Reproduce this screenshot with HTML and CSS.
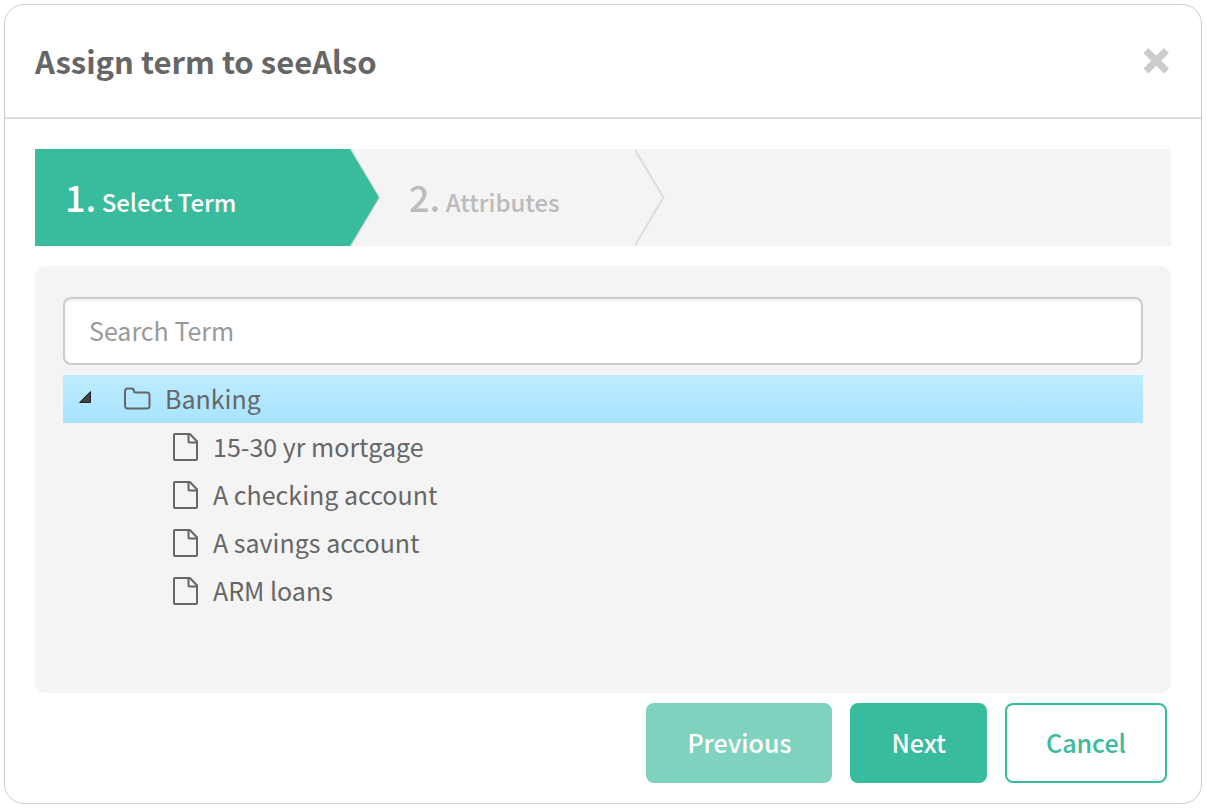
FILE: index.html
```html
<!DOCTYPE html>
<html lang="en">
<head>
<meta charset="utf-8">
<title>Assign term to seeAlso</title>
<link rel="stylesheet" href="styles.css">
</head>
<body>
<svg class="symbols" aria-hidden="true">
  <symbol id="file" viewBox="0 0 26 28">
    <path d="M3 1H18L25 8.500V26a1 1 0 0 1-1 1H3a1 1 0 0 1-1-1V2a1 1 0 0 1 1-1z"/>
    <path d="M16.500 1V8.500a1 1 0 0 0 1 1H25"/>
  </symbol>
</svg>
<div class="modal" role="dialog" aria-labelledby="title">
  <header class="modal-header">
    <h1 class="modal-title" id="title">Assign term to seeAlso</h1>
    <button class="close" type="button" aria-label="Close">
      <svg width="26" height="26" viewBox="0 0 26 26"><path d="M3 2.500L23.500 23M23.500 2.500L3 23"/></svg>
    </button>
  </header>
  <main class="modal-body">
    <ol class="steps">
      <li class="step step-active">
        <span class="step-label"><span class="step-number">1.</span> Select Term</span>
        <svg class="arrow" viewBox="0 0 30 97" preserveAspectRatio="none"><path class="arrow-line" d="M0 -1L29 48.500L0 98"/><path class="arrow-fill" d="M0 0L29 48.500L0 97z"/></svg>
      </li>
      <li class="step">
        <span class="step-label"><span class="step-number">2.</span> Attributes</span>
        <svg class="arrow" viewBox="0 0 30 97" preserveAspectRatio="none"><path class="arrow-line" d="M-1 -1L28.500 48.500L-1 98"/></svg>
      </li>
    </ol>
    <section class="panel">
      <input class="search" type="text" placeholder="Search Term" aria-label="Search Term">
      <ul class="tree" role="tree">
        <li role="treeitem" aria-expanded="true">
          <div class="row row-selected">
            <svg class="toggle" width="14" height="18" viewBox="0 0 14 18"><path d="M1.500 12.500L12.500 1.500V12.500z"/></svg>
            <svg class="icon folder" width="28" height="24" viewBox="0 0 28 24"><path d="M2 4a2.500 2.500 0 0 1 2.500-2.500H8.500a2.500 2.500 0 0 1 2.500 2.500A1.500 1.500 0 0 0 12.500 5.500H24a2.500 2.500 0 0 1 2.500 2.500V19a2.500 2.500 0 0 1-2.500 2.500H4.500a2.500 2.500 0 0 1-2.500-2.500z"/></svg>
            <span class="row-label">Banking</span>
          </div>
          <ul class="tree" role="group">
            <li class="row row-child" role="treeitem"><svg class="icon" width="26" height="28"><use href="#file"/></svg><span class="row-label">15-30 yr mortgage</span></li>
            <li class="row row-child" role="treeitem"><svg class="icon" width="26" height="28"><use href="#file"/></svg><span class="row-label">A checking account</span></li>
            <li class="row row-child" role="treeitem"><svg class="icon" width="26" height="28"><use href="#file"/></svg><span class="row-label">A savings account</span></li>
            <li class="row row-child" role="treeitem"><svg class="icon" width="26" height="28"><use href="#file"/></svg><span class="row-label">ARM loans</span></li>
          </ul>
        </li>
      </ul>
    </section>
  </main>
  <footer class="modal-footer">
    <button class="button" type="button" disabled>Previous</button>
    <button class="button" type="button">Next</button>
    <button class="button button-outline" type="button">Cancel</button>
  </footer>
</div>
</body>
</html>
```

FILE: styles.css
```css
* {
  box-sizing: border-box;
}

body {
  margin: 0;
  padding: 4px;
  min-height: 100vh;
  display: flex;
  background: #fff;
  color: #666;
  font-family: "Noto Sans CJK SC", "Noto Sans", sans-serif;
  font-size: 25px;
  line-height: 48px;
}

button,
input {
  font: inherit;
}

.symbols {
  position: absolute;
  width: 0;
  height: 0;
}

.modal {
  flex: 1;
  display: flex;
  flex-direction: column;
  border: 1px solid #ccc;
  border-radius: 20px;
  background: #fff;
}

.modal-header {
  display: flex;
  align-items: center;
  justify-content: space-between;
  padding: 32px 32px 32px 30px;
  border-bottom: 2px solid #ddd;
}

.modal-title {
  margin: 0;
  font-size: 31px;
  font-weight: 700;
  line-height: 48px;
}

.close {
  display: flex;
  padding: 0;
  border: 0;
  background: none;
}

.close path {
  stroke: #ccc;
  stroke-width: 7;
}

.modal-body {
  flex: 1;
  display: flex;
  flex-direction: column;
  gap: 20px;
  padding: 30px 30px 0;
}

.steps {
  display: flex;
  margin: 0;
  padding: 0;
  list-style: none;
  background: #f4f4f4;
  color: #bbb;
}

.step {
  display: flex;
  justify-content: space-between;
  width: 285px;
  height: 97px;
  padding-left: 29px;
  font-size: 24px;
  font-weight: 500;
}

.step-active {
  width: 345px;
  padding-left: 0;
  color: #fff;
}

.step-label {
  flex: 1;
  padding-top: 23px;
}

.step-active .step-label {
  padding-left: 30px;
  background: #39bb9d;
}

.step-number {
  font-size: 36px;
}

.arrow {
  width: 30px;
  height: 97px;
}

.arrow-fill {
  fill: #39bb9d;
}

.arrow-line {
  fill: none;
  stroke: #ddd;
  stroke-width: 2;
}

.panel {
  flex: 1;
  padding: 31px 28px 30px;
  border-radius: 10px;
  background: #f4f4f4;
}

.search {
  display: block;
  width: 100%;
  height: 68px;
  margin-bottom: 10px;
  padding: 0 24px 2px;
  border: 2px solid #ccc;
  border-radius: 8px;
  background: #fff;
  box-shadow: inset 0 2px 3px #0001;
  color: #666;
}

.search::placeholder {
  color: #999;
  opacity: 1;
}

.tree {
  margin: 0;
  padding: 0;
  list-style: none;
}

.row {
  display: flex;
  align-items: center;
  height: 48px;
}

.row-label {
  padding-bottom: 2px;
}

.row-selected {
  padding-left: 15px;
  background: linear-gradient(#beebff, #a8e4ff);
}

.row-child {
  gap: 15px;
  padding-left: 109px;
}

.toggle {
  margin-right: 31px;
  fill: #444;
  stroke: #222;
}

.icon {
  fill: none;
  stroke: #666;
  stroke-width: 2;
}

.folder {
  margin-right: 14px;
}

.modal-footer {
  display: flex;
  justify-content: flex-end;
  gap: 18px;
  padding: 10px 34px 20px;
}

.button {
  height: 80px;
  padding: 0 39px 2px;
  border: 2px solid #39bb9d;
  border-radius: 8px;
  background: #39bb9d;
  color: #fff;
  font-weight: 500;
}

.button:disabled {
  border-color: #7fd2be;
  background: #7fd2be;
}

.button-outline {
  background: #fff;
  color: #39bb9d;
}
```
